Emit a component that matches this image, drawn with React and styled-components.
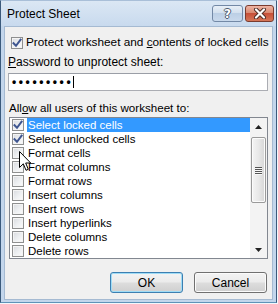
import styled, { createGlobalStyle } from 'styled-components';

const GlobalStyle = createGlobalStyle`
  html, body {
    margin: 0;
    padding: 0;
    background: #f4f7fb;
  }

  body {
    font-family: 'Liberation Sans', Arial, sans-serif;
    font-size: 12px;
    color: #000;
  }
`;

const permissions = [
  { label: 'Select locked cells', checked: true, selected: true },
  { label: 'Select unlocked cells', checked: true },
  { label: 'Format cells' },
  { label: 'Format columns' },
  { label: 'Format rows' },
  { label: 'Insert columns' },
  { label: 'Insert rows' },
  { label: 'Insert hyperlinks' },
  { label: 'Delete columns' },
  { label: 'Delete rows' },
];

function CheckBox({ checked }) {
  return (
    <Box>
      {checked && (
        <svg width="10" height="10" viewBox="0 0 10 10">
          <path
            d="M1.5 5.2 L4 7.8 L8.6 1.6"
            fill="none"
            stroke="#3f5690"
            strokeWidth="2"
            strokeLinecap="square"
          />
        </svg>
      )}
    </Box>
  );
}

function Cursor() {
  return (
    <CursorWrap>
      <svg width="13" height="21" viewBox="0 0 13 21">
        <path
          d="M0.5 0.5 L0.5 16.5 L4.3 12.8 L7 19.3 L9.3 18.3 L6.7 12 L11.7 12 Z"
          fill="#fff"
          stroke="#000"
          strokeWidth="1"
          strokeLinejoin="miter"
        />
      </svg>
    </CursorWrap>
  );
}

export default function App() {
  return (
    <>
      <GlobalStyle />
      <Window>
        <TitleBar>
          <Title>Protect Sheet</Title>
          <CaptionButtons>
            <HelpButton>?</HelpButton>
            <CloseButton>
              <svg width="14" height="11" viewBox="0 0 14 11">
                <path d="M3 1.5 L11 9.5 M11 1.5 L3 9.5" stroke="#4a2a24" strokeWidth="4" strokeLinecap="round" />
                <path d="M3 1.5 L11 9.5 M11 1.5 L3 9.5" stroke="#fff" strokeWidth="2.2" strokeLinecap="round" />
              </svg>
            </CloseButton>
          </CaptionButtons>
        </TitleBar>

        <Client>
          <MainOption>
            <CheckBox checked />
            <span>
              Protect worksheet and <u>c</u>ontents of locked cells
            </span>
          </MainOption>

          <FieldLabel>
            <u>P</u>assword to unprotect sheet:
          </FieldLabel>
          <PasswordBox>
            <Dots>•••••••••</Dots>
            <Caret />
          </PasswordBox>

          <ListLabel>
            All<u>o</u>w all users of this worksheet to:
          </ListLabel>
          <ListBox>
            <Items>
              {permissions.map((p) => (
                <Row key={p.label}>
                  <CheckBox checked={p.checked} />
                  <RowLabel $selected={p.selected}>{p.label}</RowLabel>
                </Row>
              ))}
            </Items>
            <ScrollBar>
              <Arrow>
                <svg width="7" height="4" viewBox="0 0 7 4">
                  <path d="M0 4 L3.5 0 L7 4 Z" fill="#222" />
                </svg>
              </Arrow>
              <Thumb>
                <Grip />
                <Grip />
                <Grip />
                <Grip />
              </Thumb>
              <TrackSpace />
              <Arrow>
                <svg width="7" height="4" viewBox="0 0 7 4">
                  <path d="M0 0 L7 0 L3.5 4 Z" fill="#222" />
                </svg>
              </Arrow>
            </ScrollBar>
          </ListBox>

          <ButtonRow>
            <DialogButton $default>OK</DialogButton>
            <DialogButton>Cancel</DialogButton>
          </ButtonRow>
        </Client>
        <Cursor />
      </Window>
    </>
  );
}

const Window = styled.div`
  position: relative;
  width: 277px;
  height: 303px;
  box-sizing: border-box;
  display: flex;
  flex-direction: column;
  padding: 0 3px 2px 3px;
  border: 1px solid #3b5a7c;
  border-top-color: #a9bfd8;
  border-bottom-color: #5f93b8;
  background: #c3d6ec;
  overflow: hidden;
`;

const TitleBar = styled.div`
  height: 25px;
  display: flex;
  align-items: flex-start;
  justify-content: space-between;
  margin: 0 -3px;
  padding: 4px 2px 0 6px;
  box-sizing: border-box;
  background: linear-gradient(#dbe7f4, #c8daee);
`;

const Title = styled.div`
  align-self: center;
  font-size: 12px;
  line-height: 15px;
  margin-top: -3px;
  color: #000;
`;

const CaptionButtons = styled.div`
  display: flex;
  gap: 2px;
`;

const CaptionButton = styled.div`
  height: 17px;
  box-sizing: border-box;
  border-radius: 3px;
  display: flex;
  align-items: center;
  justify-content: center;
`;

const HelpButton = styled(CaptionButton)`
  width: 31px;
  border: 1px solid #7389a6;
  background: linear-gradient(#e8eff7 0%, #d3e0ee 45%, #bccfe5 50%, #c9d9ec 100%);
  color: #fff;
  font-family: 'DejaVu Sans', sans-serif;
  font-weight: bold;
  font-size: 12px;
  text-shadow:
    1px 0 0 #4c5b6e,
    -1px 0 0 #4c5b6e,
    0 1px 0 #4c5b6e,
    0 -1px 0 #4c5b6e;
`;

const CloseButton = styled(CaptionButton)`
  width: 29px;
  border: 1px solid #7a3b2e;
  background: linear-gradient(#eeb4a4 0%, #d98a72 45%, #c75039 50%, #d57658 100%);
`;

const Client = styled.div`
  flex: 1;
  display: flex;
  flex-direction: column;
  align-items: flex-start;
  background: #f0f0f0;
  border: 1px solid #a5bad2;
`;

const MainOption = styled.div`
  height: 13px;
  display: flex;
  align-items: center;
  gap: 3px;
  margin: 9px 0 0 6px;
  white-space: nowrap;
  font-size: 11.8px;
  line-height: 13px;
`;

const Box = styled.div`
  width: 12px;
  height: 12px;
  flex: none;
  box-sizing: border-box;
  border: 1px solid #8e8f8f;
  background: linear-gradient(135deg, #d8dade 0%, #eef0f2 55%, #fcfcfc 100%);
  box-shadow: inset 0 0 0 1px #f4f4f4;
  display: flex;
  align-items: center;
  justify-content: center;
`;

const FieldLabel = styled.div`
  line-height: 15px;
  margin: 6px 0 0 3px;
`;

const PasswordBox = styled.div`
  width: 260px;
  height: 18px;
  box-sizing: border-box;
  margin: 3px 0 0 3px;
  padding-left: 3px;
  display: flex;
  align-items: center;
  background: #fff;
  border: 1px solid #abadb3;
  border-top-color: #9a9ea6;
`;

const Dots = styled.span`
  font-weight: bold;
  font-size: 12px;
  letter-spacing: 2.6px;
  line-height: 16px;
`;

const Caret = styled.span`
  width: 1px;
  height: 12px;
  background: #000;
`;

const ListLabel = styled.div`
  font-size: 11.6px;
  line-height: 15px;
  margin: 9px 0 0 4px;
`;

const ListBox = styled.div`
  width: 259px;
  height: 142px;
  box-sizing: border-box;
  margin: 2px 0 0 4px;
  display: flex;
  background: #fff;
  border: 1px solid #828790;
`;

const Items = styled.div`
  flex: 1;
  display: flex;
  flex-direction: column;
`;

const Row = styled.div`
  height: 14px;
  display: flex;
  align-items: center;
  padding-left: 2px;
`;

const RowLabel = styled.div`
  flex: 1;
  height: 14px;
  margin-left: 3px;
  padding-left: 1px;
  font-size: 11.5px;
  line-height: 14px;
  white-space: nowrap;
  background: ${(p) => (p.$selected ? '#3399ff' : 'transparent')};
  color: ${(p) => (p.$selected ? '#fff' : '#000')};
`;

const ScrollBar = styled.div`
  width: 17px;
  display: flex;
  flex-direction: column;
  align-items: center;
  background: #f3f3f3;
`;

const Arrow = styled.div`
  width: 17px;
  height: 17px;
  flex: none;
  display: flex;
  align-items: center;
  justify-content: center;
`;

const Thumb = styled.div`
  width: 15px;
  height: 66px;
  margin-top: 2px;
  flex: none;
  box-sizing: border-box;
  border: 1px solid #9a9a9a;
  border-radius: 2px;
  background: linear-gradient(to right, #f4f4f4 0%, #e8e8e8 50%, #d6d6d6 100%);
  box-shadow: inset 0 0 0 1px #fbfbfb;
  display: flex;
  flex-direction: column;
  align-items: center;
  justify-content: center;
  gap: 1px;
`;

const Grip = styled.div`
  width: 7px;
  height: 1px;
  background: #555;
  box-shadow: 0 1px 0 #f8f8f8;
`;

const TrackSpace = styled.div`
  flex: 1;
`;

const ButtonRow = styled.div`
  align-self: stretch;
  display: flex;
  justify-content: flex-end;
  gap: 11px;
  margin: 13px 5px 0 0;
`;

const DialogButton = styled.div`
  width: 73px;
  height: 21px;
  box-sizing: border-box;
  display: flex;
  align-items: center;
  justify-content: center;
  font-size: 12px;
  border-radius: 3px;
  border: 1px solid ${(p) => (p.$default ? '#3c7fb1' : '#707070')};
  box-shadow: ${(p) => (p.$default ? 'inset 0 0 0 1px #9fdcf6' : 'inset 0 0 0 1px #fbfbfb')};
  background: linear-gradient(#f3f3f3 0%, #ebebeb 48%, #dddddd 52%, #cfcfcf 100%);
`;

const CursorWrap = styled.div`
  position: absolute;
  left: 18px;
  top: 150px;
  width: 13px;
  height: 21px;
  line-height: 0;
`;
